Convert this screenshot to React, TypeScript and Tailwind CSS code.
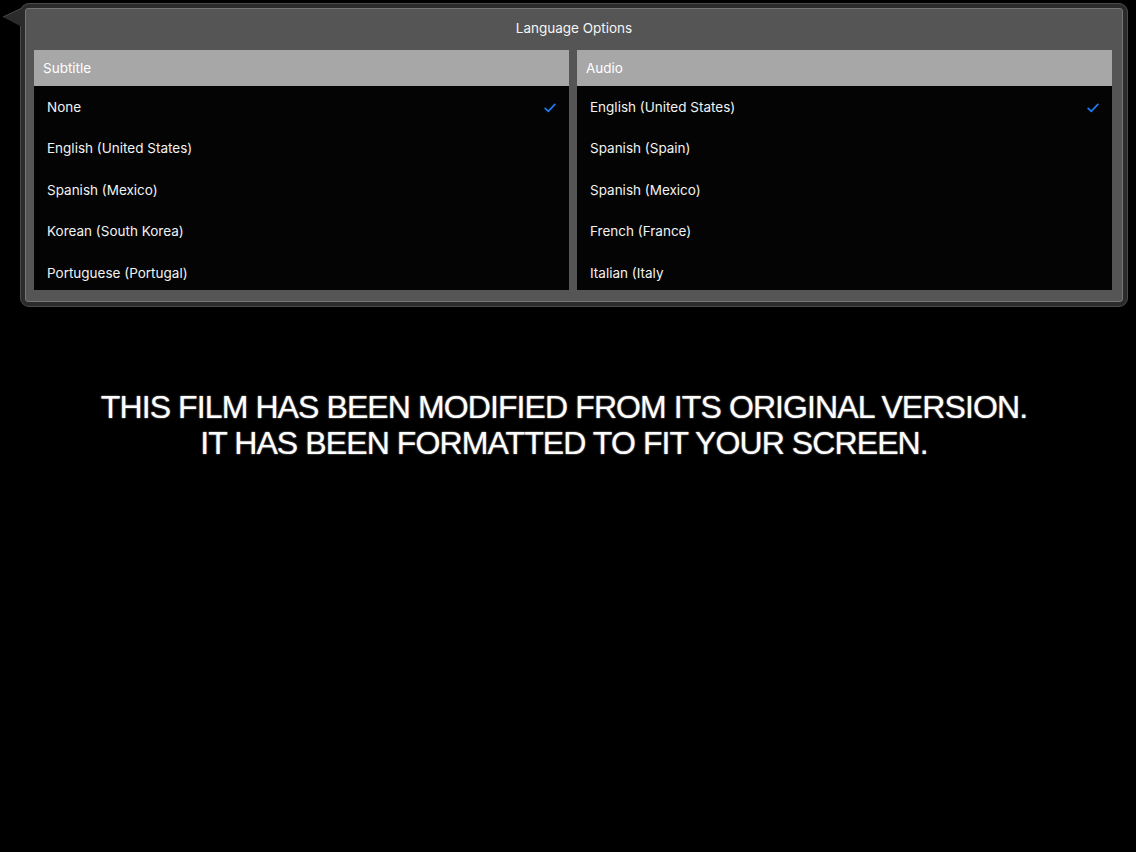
import React from 'react';

const subtitles = [
    { name: "None", checked: true },
    { name: "English (United States)" },
    { name: "Spanish (Mexico)" },
    { name: "Korean (South Korea)" },
    { name: "Portuguese (Portugal)" },
];

const audio = [
    { name: "English (United States)", checked: true },
    { name: "Spanish (Spain)" },
    { name: "Spanish (Mexico)" },
    { name: "French (France)" },
    { name: "Italian (Italy" },
];

function Check() {
    return (
        <svg width="12" height="10" viewBox="0 0 12 10" fill="none" className="mt-[2px]">
            <path d="M1.2 5.4 L4.3 8.4 L10.8 1.4" stroke="#1d7cf2" strokeWidth="1.7" strokeLinecap="round" strokeLinejoin="round" />
        </svg>
    );
}

function OptionList({ title, items }: { title: string; items: { name: string; checked?: boolean }[] }) {
    return (
        <div className="w-[535px] h-[240px] overflow-hidden flex flex-col bg-[#040404]">
            <div className="h-[36px] shrink-0 bg-[#a7a7a7] flex items-center pl-[9px] text-[13.5px] text-white">
                {title}
            </div>
            {items.map((item) => (
                <div key={item.name} className="h-[41.6px] shrink-0 flex items-center justify-between pl-[13px] pr-[13px] text-[13.5px] text-[#f2f2f2]">
                    <span>{item.name}</span>
                    {item.checked && <Check />}
                </div>
            ))}
        </div>
    );
}

export default function App() {
    return (
        <div className="w-full h-[852px] bg-black relative" style={{ fontFamily: 'Inter, "Noto Sans", sans-serif' }}>
            <div className="pt-[3px] pl-[20px]">
                {/* popover arrow */}
                <svg className="absolute left-[2px] top-[7px]" width="22" height="22" viewBox="0 0 22 22">
                    <path d="M1 10 L20 1 L20 20 Z" fill="#2b2b2b" />
                    <path d="M1 10 L20 1" stroke="#4a4a4a" strokeWidth="1" />
                </svg>
                <div className="w-[1108px] h-[304px] rounded-[9px] bg-[#2b2b2b] border border-[#4a4a4a] p-[4px]">
                    <div className="h-full rounded-[3px] border border-[#767676] bg-[#555555] flex flex-col px-[8px]">
                        <div className="h-[40px] flex items-center justify-center pb-[2px] text-[13.5px] text-[#f4f4f4]">
                            Language Options
                        </div>
                        <div className="flex gap-[8px] mt-[1px]">
                            <OptionList title="Subtitle" items={subtitles} />
                            <OptionList title="Audio" items={audio} />
                        </div>
                    </div>
                </div>
            </div>

            <div
                className="mt-[82px] pr-[8px] text-center text-[32px] leading-[36px] tracking-[-0.9px] text-white"
                style={{ fontFamily: '"Liberation Sans", Arial, sans-serif', textShadow: '0 0 2px #777, 0 0 1px #999' }}
            >
                <div>THIS FILM HAS BEEN MODIFIED FROM ITS ORIGINAL VERSION.</div>
                <div>IT HAS BEEN FORMATTED TO FIT YOUR SCREEN.</div>
            </div>
        </div>
    );
}
